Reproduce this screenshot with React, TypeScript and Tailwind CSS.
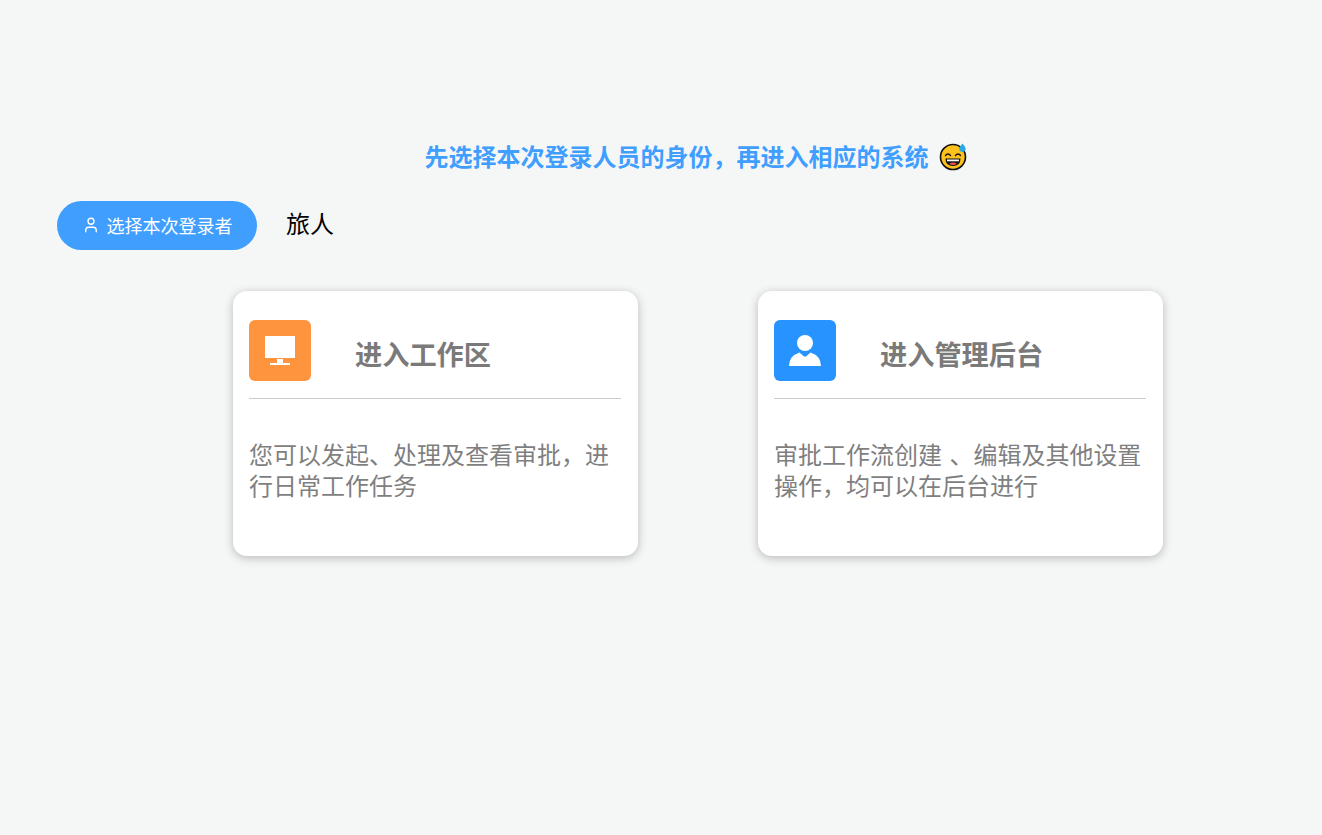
import { User } from "lucide-react"

const font = "font-['Noto_Sans_CJK_SC','Liberation_Sans',sans-serif]"

function SweatSmile() {
  return (
    <svg width="29" height="29" viewBox="0 0 29 29" className="ml-[10px]">
      <circle cx="14" cy="15" r="12.5" fill="#fcc21b" stroke="#111" strokeWidth="1.6" />
      <path d="M6.5 13.5q2.5-3 5 0M16.5 13.5q2.5-3 5 0" fill="none" stroke="#111" strokeWidth="1.4" strokeLinecap="round" />
      <path d="M6.5 16.5h15q0 7.5-7.500 7.500t-7.500-7.500z" fill="#111" />
      <path d="M8 17.500h12v1.800H8z" fill="#fff" />
      <path d="M10 22q4-2.800 8 0q-4 2.200-8 0z" fill="#ef5350" />
      <path d="M23.500 1.500q4 4.500 3 6.500a3.300 3.300 0 0 1-6.300-.5q0-2.500 3.300-6z" fill="#29a9e6" />
    </svg>
  )
}

function DesktopIcon() {
  return (
    <svg width="30" height="30" viewBox="0 0 30 30" fill="#fff">
      <rect x="0" y="0" width="30" height="22" />
      <rect x="12" y="23" width="6" height="4" />
      <rect x="5" y="27" width="20" height="2" />
    </svg>
  )
}

function AdminIcon() {
  return (
    <svg width="32" height="32" viewBox="0 0 32 32" fill="#fff">
      <circle cx="16" cy="8" r="8" />
      <path d="M0 31q0-10 10.500-13.500L15 21.500h2l4.500-4Q32 21 32 31z" />
    </svg>
  )
}

function Card({ color, icon, title, desc }: { color: string; icon: React.ReactNode; title: string; desc: string }) {
  return (
    <div className="w-[405px] h-[265px] bg-white rounded-[14px] shadow-[0_2px_10px_rgba(0,0,0,0.25)] pt-[29px] pl-4 pr-[17px]">
      <div className="flex border-b border-[#cccccc] h-[79px]">
        <div className={`w-[62px] h-[61px] rounded-[6px] flex items-center justify-center ${color}`}>{icon}</div>
        <div className="ml-11 mt-[13px] text-[27.2px] leading-[40px] font-bold text-[#7a7a7a]">{title}</div>
      </div>
      <p className="mt-[39px] text-2xl leading-[31px] text-[#7f7f7f] [word-spacing:2px]">{desc}</p>
    </div>
  )
}

export default function App() {
  return (
    <div className={`min-h-screen bg-[#f5f7f7] pt-[138px] ${font}`}>
      <div className="flex items-center justify-center pl-[70px] h-9">
        <span className="text-2xl leading-9 font-bold text-[#409eff]">先选择本次登录人员的身份，再进入相应的系统</span>
        <SweatSmile />
      </div>

      <div className="flex items-center pl-[57px] mt-[27px] h-[49px]">
        <button className="w-[200px] h-[49px] rounded-full bg-[#409eff] text-white text-lg leading-[46px] pb-[2px] flex items-center justify-center gap-[7px]">
          <User size={18} strokeWidth={1.8} />
          选择本次登录者
        </button>
        <span className="ml-[29px] text-2xl text-black leading-[46px] pb-[6px]">旅人</span>
      </div>

      <div className="flex gap-[120px] pl-[233px] mt-[41px]">
        <Card
          color="bg-[#ff943e]"
          icon={<DesktopIcon />}
          title="进入工作区"
          desc="您可以发起、处理及查看审批，进行日常工作任务"
        />
        <Card
          color="bg-[#2693ff]"
          icon={<AdminIcon />}
          title="进入管理后台"
          desc="审批工作流创建 、编辑及其他设置操作，均可以在后台进行"
        />
      </div>
    </div>
  )
}
